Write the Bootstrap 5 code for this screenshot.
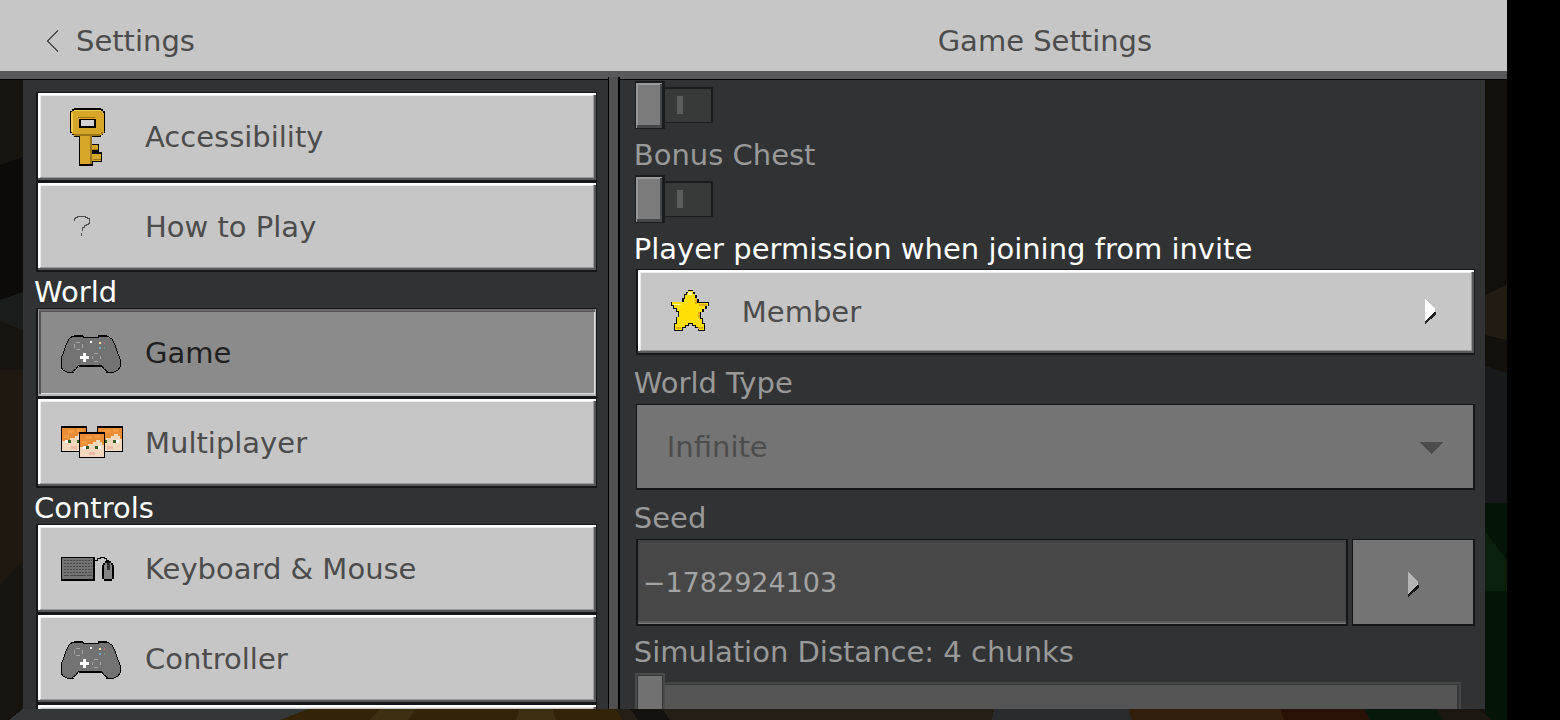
<!DOCTYPE html>
<html lang="en">
<head>
<meta charset="utf-8">
<meta name="viewport" content="width=device-width, initial-scale=1">
<title>Game Settings</title>
<link rel="stylesheet" href="https://cdn.jsdelivr.net/npm/bootstrap@5.3.0/dist/css/bootstrap.min.css">
<style>
:root{--ink:#4c4c4c;--face:#c6c6c6;--edge:#151617;--panel:#303233;--dim:#999}
body{background:#000;color:#fff;font:29px/36px "DejaVu Sans",Verdana,sans-serif}
svg{shape-rendering:crispEdges;flex:none}
.stage{height:100vh;margin-right:53px;background:#14110e}
.scene{position:absolute;inset:0;width:100%;height:100%}
.topbar{background:var(--face);color:var(--ink);border-bottom:8px solid #58585a;height:79px;flex:none;padding-top:10px}
.topbar-back{width:40%;padding-left:47px;color:inherit}
.topbar h1{font-size:inherit;line-height:inherit;font-weight:400;padding-right:20px}
.sheet{border-top:1px solid #000;padding:0 22px 11px 23px;min-height:0}
.side,.pane{background:var(--panel);min-height:0}
.side{width:40%;padding:12px 11px 0 13px}
.pane{padding:1px 10px 0 16px}
.divider{width:12px;flex:none;margin-top:-3px;background:#505051;border:solid #000;border-width:0 2px 0 1px}
.tile{height:90px;padding:0 23px;gap:22px;color:var(--ink);background:var(--face);border:solid var(--edge);border-width:1px 1px 2px 2px;
 box-shadow:inset 0 2px #fff,inset -2px -2px #58585a,inset 2px 0 #fff,inset -3px -3px #999,inset 3px 3px #ececec;font:inherit;text-align:left;flex:none}
.tile.active{background:#8b8b8b;color:#1f1f1f;box-shadow:inset 1px 0 #999,inset -1px -2px #b8b8b8,inset 0 2px #6a6869,inset 3px 3px #555354,inset -2px -3px #ddd}
.side h2{font-size:inherit;line-height:32px;padding-top:4px;margin:0 0 0 -2px;font-weight:400}
.caption{display:block;padding:10px 0 3px;margin-left:-2px;color:var(--dim)}
.caption.tight{padding:8px 0 2px}
.caption.lit{color:#fff}
.toggle{appearance:none;display:flex;align-items:center;width:78px;height:48px;margin:0 0 0 -1px}
.toggle::before{content:"";width:30px;height:48px;background:#7b7b7b;border:2px solid #1b1c1d;border-width:2px 3px 1px 1px;box-shadow:inset 1px 1px #999,inset -2px -3px #454647,inset 2px 2px #999}
.toggle::after{content:"";width:48px;height:36px;border:solid #1b1c1d;border-width:2px 2px 1px 0;background:linear-gradient(#5b5c5c,#5b5c5c) 12px 7px/6px 18px no-repeat #383a39}
.choice{height:86px;padding:0 38px 0 30px;gap:30px}
.mute{width:100%;height:86px;appearance:none;border:solid var(--edge);border-width:1px 2px 2px 1px;border-radius:0;background:#747474;color:var(--ink);opacity:1;font:inherit;padding:0 30px}
.drop{position:absolute;right:32px;top:38px;pointer-events:none}
.seedbox{height:87px;background:#474747;color:#a3a3a3;border:solid var(--edge);border-width:1px 2px 2px;border-radius:0;padding:0 5px;font:inherit;font-size:27px;box-shadow:inset 0 -1px #7b7b7b,inset 0 -3px #5b5b5b,inset 0 2px #414141;min-width:0}
.seedgo{width:123px;height:87px;padding:0;flex:none}
.slide{appearance:none;display:block;width:calc(100% - 13px);height:54px;margin:0 0 0 -1px;background:none;flex:none}
.slide::-webkit-slider-runnable-track{height:34px;background:#555;border:2px solid #454646;box-shadow:inset -2px 1px #363737}
.slide::-webkit-slider-thumb{appearance:none;width:30px;height:50px;margin:-11px 0 0 -2px;background:#717171;border:2px solid #494a4a;box-shadow:inset 1px 1px #353535,inset -1px 0 #353535}
</style>
</head>
<body>
<svg class="d-none" aria-hidden="true">
 <symbol id="pad" viewBox="0 0 62 60"><g transform="translate(0 12)">
  <path d="M13 1h9v1h15V1h9l5 3 3 6 2 6 3 8v8l-2 3-4 2h-6l-4-3-3-4H18l-3 4-4 3H6l-4-2-2-3v-8l3-8 2-6 3-6 4-3z" fill="#747374" stroke="#000"/>
  <path d="M13 0h9v2h-9zM37 0h9v2h-9zM18 30h23v2H18zM6 37h7v1H6zM45 37h7v1h-7z"/>
  <path d="M15 7h4v1h-4zM15 14h4v1h-4zM13 9h1v4h-1zM21 9h1v4h-1zM33 18h4v1h-4zM33 26h4v1h-4zM31 21h1v3h-1zM39 21h1v3h-1z" fill="#a4a6a7"/>
  <path d="M29 6h2v2h-2zM22 18h3v3h3v3h-3v3h-3v-3h-3v-3h3z" fill="#fff"/>
  <path d="M38 7h2v2h-2z" fill="#f4df9c"/><path d="M43 7h1v2h-1z" fill="#c36b79"/><path d="M38 12h2v2h-2z" fill="#6caad0"/><path d="M43 12h1v2h-1z" fill="#719c83"/></g>
 </symbol>
 <symbol id="face" viewBox="0 0 26 26"><path d="M0 0h26v26H0z"/><path d="M1 2h24v23H1z" fill="#f2d8bd"/>
  <path d="M1 2h24v11h-2v-3h-2V8h-4v2h-3v2H9v2H4v1H1z" fill="#e98e37"/><path d="M7 4h6v3H7zM16 3h5v3h-5zM3 9h5v3H3z" fill="#f39b40"/>
  <path d="M4 14h3v3H4zM19 14h3v3h-3z" fill="#fff"/><path d="M7 14h3v3H7zM16 14h3v3h-3z" fill="#345b21"/><path d="M10 20h6v3h-6z" fill="#ecb9a6"/>
 </symbol>
</svg>

<div class="stage position-relative d-flex flex-column overflow-hidden">
 <svg class="scene" viewBox="0 0 1507 720" preserveAspectRatio="none" aria-hidden="true">
  <path d="M0 79h23v641H0z" fill="#17130e"/><path d="M0 165l23-8v140L0 310z" fill="#0c0b09"/><path d="M0 300l23-8v38l-23-9z" fill="#1a1b1b"/><path d="M0 370h23v190L0 585z" fill="#1e1811"/>
  <path d="M1485 79h22v320h-22z" fill="#13100c"/><path d="M1485 295l22-10v55l-22-5z" fill="#211b12"/><path d="M1485 366l22 7v130h-22z" fill="#18191a"/><path d="M1485 503h22v217h-22z" fill="#041508"/><path d="M1485 531l22 30v30h-22z" fill="#0a200c"/>
  <path d="M23 709h285l-22 11H9z" fill="#343738"/><path d="M308 709h308l6 11H280z" fill="#332407"/><path d="M380 709h36l-8 11h-38zM520 709h32l4 11h-40z" fill="#3d3010"/>
  <path d="M616 709h384l10 11H622z" fill="#251e17"/><path d="M630 709h32l8 11h-32z" fill="#15110e"/><path d="M994 709h134l7 11H992z" fill="#292b2e"/><path d="M1128 709h170l10 11h-176z" fill="#321f0b"/><path d="M1280 709h84l8 11h-88z" fill="#281107"/><path d="M1364 709h72l10 11h-76z" fill="#06190b"/><path d="M1436 709h42l14 11h-48z" fill="#1d1711"/>
 </svg>

 <header class="topbar position-relative d-flex align-items-center">
  <a href="#" class="topbar-back d-flex align-items-center text-decoration-none">
   <svg width="29" height="22" viewBox="0 0 29 22" aria-hidden="true"><path d="M11 .5h-1v1H9v1H8v1H7v1H6v1H5v1H4v1H3v1H2v1H1v1H.5v1H1v1h1v1h1v1h1v1h1v1h1v1h1v1h1v1h1v1h1v1h1" fill="none" stroke="#4c4c4c"/></svg>Settings</a>
  <h1 class="flex-fill text-center mb-0">Game Settings</h1>
 </header>

 <div class="sheet position-relative d-flex flex-fill">
  <nav class="side d-flex flex-column overflow-hidden" aria-label="Settings sections">
   <button class="tile d-flex align-items-center"><svg width="62" height="60" viewBox="0 0 62 60" aria-hidden="true"><g transform="translate(9 1)">
     <path d="M4 0h27v1h2v2h2v22h-2v2h-2v2h-9v7h7v8h3v10h-9v4H9V29H4v-2H2v-2H0V3h2V1h2z"/><path d="M4 2h27v1h2v2h1v20h-2v2h-2v1h-9v9h7v5h-7v4h10v7h-9v3H10V28H4v-2H2v-2H1V4h1V3h2z" fill="#d6a628"/><path d="M1 5h2v19H1zM4 2h27v1H4z" fill="#f0cb55"/><path d="M4 26h27v-2h2v2h-3v2H5zM8 9h17v1H8zM21 28h1v28h-2V28zM23 41h5v1h-5zM23 51h8v1h-8z" fill="#9b7419"/><path d="M9 11h17v9H9z"/><path d="M11 12h13v6H11z" fill="#d4d4d4"/></g></svg>Accessibility</button>
   <button class="tile d-flex align-items-center"><svg width="62" height="60" viewBox="0 0 62 60" aria-hidden="true"><path d="M13 24v-3h1v-1h2v-1h8v1h2v1h2v5h-1v1h-2v1h-2v2h-2v4M20 36v3" fill="none" stroke="#4c4c4c"/></svg>How to Play</button>
   <h2>World</h2>
   <button class="tile active d-flex align-items-center" aria-current="page"><svg width="62" height="60" aria-hidden="true"><use href="#pad"/></svg>Game</button>
   <button class="tile d-flex align-items-center"><svg width="62" height="60" aria-hidden="true"><use href="#face" x="0" y="13" width="26" height="26"/><use href="#face" x="36" y="13" width="26" height="26"/><use href="#face" x="18" y="19" width="26" height="26"/></svg>Multiplayer</button>
   <h2>Controls</h2>
   <button class="tile d-flex align-items-center"><svg width="62" height="60" viewBox="0 0 62 60" aria-hidden="true"><path d="M0 18h34v24H0z"/><path d="M1 19h31v21H1z" fill="#737373"/><path d="M3 21h28M3 24h28M3 27h28M3 30h28M3 33h28" stroke="#484848" stroke-dasharray="2 1"/><path d="M3 36h5M9 36h16M26 36h5" stroke="#484848"/>
     <path d="M34 21h2v-2h3v-1h4v1h2v2h2v2" fill="none" stroke="#000"/><path d="M44 22h6v2h2v2h1v14h-2v2h-8v-2h-2V26h1v-2h2z"/><path d="M44 24h6v2h1v14h-8V26h1z" fill="#858585"/><path d="M46 24h3v7h-3z" fill="#333"/></svg>Keyboard &amp; Mouse</button>
   <button class="tile d-flex align-items-center"><svg width="62" height="60" aria-hidden="true"><use href="#pad"/></svg>Controller</button>
   <button class="tile" aria-label="Touch"></button>
  </nav>
  <div class="divider"></div>
  <main class="pane flex-fill d-flex flex-column overflow-hidden">
   <input type="checkbox" class="toggle flex-shrink-0" disabled aria-label="Starting map">
   <label class="caption tight" for="bonus">Bonus Chest</label>
   <input type="checkbox" class="toggle flex-shrink-0" id="bonus" disabled>
   <label class="caption tight lit" for="permission">Player permission when joining from invite</label>
   <button class="tile choice d-flex align-items-center" id="permission"><svg width="44" height="44" viewBox="0 0 44 44" aria-hidden="true">
     <path d="M20 0h5v2h2v3h2v4h2v3h10v4h-2v3h-3v3h-3v6h2v5h2v8h-7v-3h-3v-2h-3v-2h-3v2h-3v2h-3v3H6v-8h2v-6h2v-5H8v-3H5v-3H3v-4h11V8h2V4h2V2h2z"/><path d="M20 1h5v3h2v4h2v5h11v3h-3v3h-3v3h-2v7h2v5h2v6h-5v-3h-3v-2h-3v-2h-5v2h-3v2h-3v3H7v-6h2v-7h2v-6H9v-3H6v-3H4v-3h12V9h1V5h2z" fill="#ffdf05"/><path d="M20 2h4v3h-4zM5 14h8v1H5z" fill="#fff5a0"/><path d="M31 14h8v2h-8zM27 8h2v6h-2zM8 37h5v2H8zM30 37h5v2h-5zM30 22h2v6h-2z" fill="#e0ae08"/></svg>Member
    <svg class="ms-auto" width="11" height="25" viewBox="0 0 11 25" aria-hidden="true"><path d="M0 3l11 11v2L0 25z" fill="#222"/><path d="M0 0l10 9v4L0 22z" fill="#fff"/></svg></button>
   <label class="caption" for="worldtype">World Type</label>
   <div class="position-relative flex-shrink-0 d-flex"><select class="mute" id="worldtype" disabled><option>Infinite</option></select>
    <svg class="drop" width="24" height="12" viewBox="0 0 24 12" aria-hidden="true"><path d="M0 0h24L12 12z" fill="#4c4c4c"/></svg></div>
   <label class="caption" for="seed">Seed</label>
   <div class="d-flex gap-1 flex-shrink-0"><input class="seedbox flex-fill" id="seed" value="−1782924103" disabled>
    <button class="mute seedgo" disabled aria-label="Choose a seed"><svg width="11" height="25" viewBox="0 0 11 25" aria-hidden="true"><path d="M0 3l11 11v2L0 25z" fill="#111"/><path d="M0 0l10 9v4L0 22z" fill="#b5b5b5"/></svg></button></div>
   <label class="caption tight" for="distance">Simulation Distance: 4 chunks</label>
   <input type="range" class="slide" id="distance" min="4" max="12" value="4" disabled>
  </main>
 </div>
</div>
<script src="https://cdn.jsdelivr.net/npm/bootstrap@5.3.0/dist/js/bootstrap.bundle.min.js"></script>
</body>
</html>
